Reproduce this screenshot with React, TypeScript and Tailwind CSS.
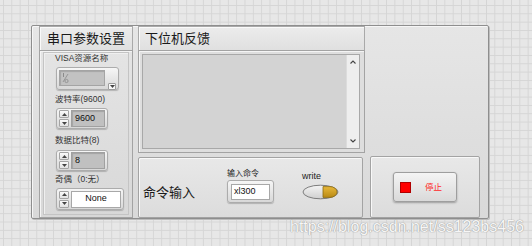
import React from "react";

const cjk = "font-['Liberation_Sans','Noto_Sans_CJK_SC',sans-serif]";

function Arrow({ up }: { up: boolean }) {
  return (
    <svg width="5" height="3" viewBox="0 0 5 3">
      {up ? <path d="M0 3 L2.5 0 L5 3 Z" fill="#444" /> : <path d="M0 0 L2.5 3 L5 0 Z" fill="#444" />}
    </svg>
  );
}

function IncDec() {
  return (
    <div className="flex flex-col gap-[1px] w-[10px]">
      <div className="h-[8px] flex items-center justify-center border border-[#a4a4a4] bg-gradient-to-b from-[#fafafa] to-[#e2e2e2] rounded-[1px]">
        <Arrow up />
      </div>
      <div className="h-[8px] flex items-center justify-center border border-[#a4a4a4] bg-gradient-to-b from-[#fafafa] to-[#e2e2e2] rounded-[1px]">
        <Arrow up={false} />
      </div>
    </div>
  );
}

function Label({ children, className = "" }: { children: React.ReactNode; className?: string }) {
  return <div className={`${cjk} text-[8.5px] leading-[11px] text-[#333] ${className}`}>{children}</div>;
}

function Numeric({ value }: { value: string }) {
  return (
    <div className="w-[52px] h-[21px] rounded-[3px] border border-[#acacac] bg-gradient-to-b from-[#f6f6f6] to-[#d8d8d8] shadow-[0_1px_1px_rgba(0,0,0,0.2)] flex items-center pl-[2px] pr-[2px] gap-[2px]">
      <IncDec />
      <div className="flex-1 h-[17px] bg-[#c0c0c0] border border-[#a0a0a0] shadow-[inset_1px_1px_1px_rgba(0,0,0,0.15)] flex items-center pl-[3px] font-['Liberation_Sans',sans-serif] text-[9px] text-[#111]">
        {value}
      </div>
    </div>
  );
}

export default function App() {
  return (
    <div
      className="relative w-[532px] h-[246px] overflow-hidden bg-[#e7e7e7] bg-[linear-gradient(to_right,#d5d5d5_1px,transparent_1px),linear-gradient(to_bottom,#d5d5d5_1px,transparent_1px)] bg-[size:8.33px_8.33px] bg-[position:3px_5px] pl-[31px] pt-[25px]"
    >
      {/* outer frame */}
      <div className="w-[458px] h-[194px] border border-[#8e8e8e] rounded-[2px] bg-gradient-to-b from-[#e6e6e6] to-[#d9d9d9] shadow-[inset_1px_1px_0_#f6f6f6,1px_1px_0_#bdbdbd] flex">
        {/* left column */}
        <div className="ml-[7px] w-[94px] flex flex-col">
          <div className="h-[24px] border border-b-0 border-[#a9a9a9] bg-gradient-to-b from-[#ececec] to-[#e0e0e0] shadow-[inset_1px_1px_0_#fafafa] pl-[7px] flex items-center">
            <span className={`${cjk} text-[13px] text-[#1a1a1a]`}>串口参数设置</span>
          </div>
          <div className="flex-1 border border-[#a3a3a3] bg-gradient-to-b from-[#e4e4e4] to-[#d8d8d8] shadow-[inset_1px_1px_0_#f4f4f4] px-[3px] pt-[1px] pb-[2px]">
            <div className="h-full border border-[#c4c4c4] shadow-[inset_1px_1px_0_#efefef] pl-[12px]">
              <Label className="-ml-[1px]">VISA资源名称</Label>
              <div className="mt-[3px] w-[63px] h-[23px] rounded-[3px] border border-[#acacac] bg-gradient-to-b from-[#f6f6f6] to-[#d8d8d8] shadow-[0_1px_1px_rgba(0,0,0,0.2)] relative">
                <div className="absolute left-[2px] top-[2px] w-[46px] h-[16px] bg-[#c2c2c2] border border-[#a4a4a4] shadow-[inset_1px_1px_1px_rgba(0,0,0,0.15)] pl-[2px] pt-[1px]">
                  <svg width="7" height="12" viewBox="0 0 7 12">
                    <path d="M1.5 1 V5" stroke="#8a8a8a" strokeWidth="1" />
                    <path d="M6 2 L1 10" stroke="#8a8a8a" strokeWidth="0.8" />
                    <circle cx="4.5" cy="9" r="1.6" stroke="#8a8a8a" strokeWidth="0.8" fill="none" />
                  </svg>
                </div>
                <div className="absolute left-[51px] top-[15px] w-[8px] h-[7px] bg-[#f8f8f8] border border-[#9c9c9c] rounded-[1px] flex items-center justify-center">
                  <Arrow up={false} />
                </div>
              </div>
              <Label className="mt-[4px] -ml-[1px]">波特率(9600)</Label>
              <div className="mt-[3px]">
                <Numeric value="9600" />
              </div>
              <Label className="mt-[6px] -ml-[1px]">数据比特(8)</Label>
              <div className="mt-[4px]">
                <Numeric value="8" />
              </div>
              <Label className="mt-[3px] -ml-[1px]">奇偶（0:无）</Label>
              <div className="mt-[3px] w-[68px] h-[22px] rounded-[3px] border border-[#acacac] bg-gradient-to-b from-[#f6f6f6] to-[#d8d8d8] shadow-[0_1px_1px_rgba(0,0,0,0.2)] flex items-center pl-[2px] pr-[2px] gap-[2px]">
                <IncDec />
                <div className="flex-1 h-[17px] bg-white border border-[#a8a8a8] flex items-center justify-center font-['Liberation_Sans',sans-serif] text-[9px] text-[#111]">
                  None
                </div>
              </div>
            </div>
          </div>
        </div>

        {/* middle column */}
        <div className="ml-[5px] w-[227px] flex flex-col">
          <div className="h-[24px] border border-b-0 border-[#a9a9a9] bg-gradient-to-b from-[#ececec] to-[#e0e0e0] shadow-[inset_1px_1px_0_#fafafa] pl-[6px] flex items-center">
            <span className={`${cjk} text-[13px] text-[#1a1a1a]`}>下位机反馈</span>
          </div>
          <div className="h-[103px] border border-[#a3a3a3] bg-[#dedede] shadow-[inset_1px_1px_0_#f4f4f4] p-[3px] pr-[4px]">
            <div className="h-full border border-[#a8a8a8] bg-[#d3d3d3] flex justify-end">
              <div className="w-[13px] h-full bg-[#eeeeee] border-l border-[#dcdcdc] flex flex-col items-center justify-between py-[5px]">
                <svg width="6" height="4" viewBox="0 0 6 4">
                  <path d="M0.5 3.5 L3 1 L5.5 3.5" stroke="#444" strokeWidth="1.1" fill="none" />
                </svg>
                <svg width="6" height="4" viewBox="0 0 6 4">
                  <path d="M0.5 0.5 L3 3 L5.5 0.5" stroke="#444" strokeWidth="1.1" fill="none" />
                </svg>
              </div>
            </div>
          </div>
          <div className="mt-[4px] w-[225px] flex-1 border border-[#a3a3a3] rounded-[2px] bg-gradient-to-b from-[#e8e8e8] to-[#dcdcdc] shadow-[inset_1px_1px_0_#f8f8f8] flex items-start pl-[4px]">
            <span className={`${cjk} mt-[26px] text-[13px] leading-[17px] text-[#1a1a1a]`}>命令输入</span>
            <div className="ml-[32px] mt-[11px] flex flex-col items-start">
              <div className={`${cjk} text-[8px] leading-[10px] text-[#222]`}>输入命令</div>
              <div className="mt-[1px] w-[47px] h-[23px] rounded-[3px] border border-[#acacac] bg-gradient-to-b from-[#f6f6f6] to-[#d8d8d8] shadow-[0_1px_1px_rgba(0,0,0,0.2)] flex items-center justify-center">
                <div className="w-[39px] h-[16px] bg-white border border-[#a8a8a8] flex items-center pl-[2px] font-['Liberation_Sans',sans-serif] text-[9px] text-[#111]">
                  xl300
                </div>
              </div>
            </div>
            <div className="ml-[28px] mt-[13px] flex flex-col items-start">
              <div className="font-['Liberation_Sans',sans-serif] text-[9px] leading-[10px] text-[#222]">write</div>
              <svg className="mt-[3px]" width="38" height="16" viewBox="0 0 38 16">
                <defs>
                  <linearGradient id="tg" x1="0" y1="0" x2="0" y2="1">
                    <stop offset="0" stopColor="#f4f4f4" />
                    <stop offset="1" stopColor="#cfcfcf" />
                  </linearGradient>
                  <linearGradient id="gg" x1="0" y1="0" x2="0" y2="1">
                    <stop offset="0" stopColor="#e8b83a" />
                    <stop offset="1" stopColor="#b98a14" />
                  </linearGradient>
                </defs>
                <ellipse cx="18.5" cy="8" rx="17.5" ry="6.8" fill="url(#tg)" stroke="#7d7d7d" strokeWidth="1" />
                <path d="M21 2.6 H28 A7 5.4 0 0 1 28 13.4 H21 Z" fill="url(#gg)" stroke="#8a6a10" strokeWidth="0.8" />
              </svg>
            </div>
          </div>
        </div>

        {/* right column */}
        <div className="ml-[5px] w-[110px] flex flex-col justify-end">
          <div className="h-[62px] border border-[#a3a3a3] rounded-[2px] bg-gradient-to-b from-[#e8e8e8] to-[#dcdcdc] shadow-[inset_1px_1px_0_#f8f8f8] pl-[22px] pt-[15px]">
            <div className="w-[64px] h-[30px] rounded-[3px] border border-[#9e9e9e] bg-gradient-to-b from-[#f4f4f4] to-[#d9d9d9] shadow-[0_1px_2px_rgba(0,0,0,0.3)] flex items-center pl-[6px]">
              <div className="w-[11px] h-[11px] bg-[#ff0000] border border-[#b00000]" />
              <span className={`${cjk} ml-[14px] text-[8.5px] text-[#ff2a2a]`}>停止</span>
            </div>
          </div>
        </div>
      </div>

      {/* watermark */}
      <div className="absolute left-[290px] top-[217px] font-['Liberation_Sans',sans-serif] text-[16px] leading-[20px] text-[#f6f6f6] [text-shadow:0_0_1px_#9a9a9a,0_0_1px_#9a9a9a] whitespace-nowrap">
        https://blog.csdn.net/ss123bs456
      </div>
    </div>
  );
}
